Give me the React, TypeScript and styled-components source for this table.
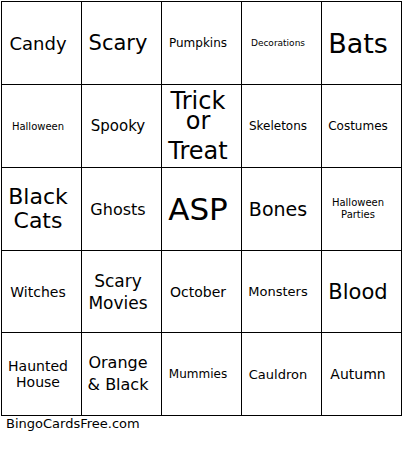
import React from "react";
import styled, { createGlobalStyle } from "styled-components";

const GlobalStyle = createGlobalStyle`
  html, body {
    margin: 0;
    padding: 0;
    background: #ffffff;
  }
  body {
    font-family: "DejaVu Sans", "Liberation Sans", sans-serif;
    color: #000000;
  }
`;

const Page = styled.div`
  padding: 1px 0 0 1px;
  width: 402px;
`;

const Board = styled.div`
  display: grid;
  grid-template-columns: repeat(5, 80px);
  grid-template-rows: 83px 83px 83px 82px 83px;
  border-top: 1px solid #000;
  border-left: 1px solid #000;
  width: 400px;
`;

const Cell = styled.div<{ $size: number; $lh?: number }>`
  box-sizing: border-box;
  border-right: 1px solid #000;
  border-bottom: 1px solid #000;
  display: flex;
  align-items: center;
  justify-content: center;
  text-align: center;
  padding: 0 7px 0 0;
  overflow: visible;
  font-size: ${(p) => p.$size}px;
  line-height: ${(p) => (p.$lh ? `${p.$lh}px` : "normal")};
`;

const Stack = styled.div`
  display: flex;
  flex-direction: column;
  align-items: center;
  margin-top: 10px;
`;

const StackLine = styled.span<{ $lh: number }>`
  display: block;
  line-height: ${(p) => p.$lh}px;
`;

const Footer = styled.div`
  font-size: 13px;
  line-height: normal;
  padding-left: 5px;
`;

type Item = { lines: string[]; size: number; lh?: number };

const items: Item[] = [
  { lines: ["Candy"], size: 18 },
  { lines: ["Scary"], size: 21 },
  { lines: ["Pumpkins"], size: 12 },
  { lines: ["Decorations"], size: 9 },
  { lines: ["Bats"], size: 27 },
  { lines: ["Halloween"], size: 10 },
  { lines: ["Spooky"], size: 15 },
  { lines: ["Trick", "or", "Treat"], size: 24 },
  { lines: ["Skeletons"], size: 12 },
  { lines: ["Costumes"], size: 12 },
  { lines: ["Black", "Cats"], size: 22, lh: 24 },
  { lines: ["Ghosts"], size: 16 },
  { lines: ["ASP"], size: 31 },
  { lines: ["Bones"], size: 19 },
  { lines: ["Halloween", "Parties"], size: 10, lh: 12 },
  { lines: ["Witches"], size: 14 },
  { lines: ["Scary", "Movies"], size: 17, lh: 22 },
  { lines: ["October"], size: 14 },
  { lines: ["Monsters"], size: 13 },
  { lines: ["Blood"], size: 21 },
  { lines: ["Haunted", "House"], size: 14, lh: 16 },
  { lines: ["Orange", "& Black"], size: 16, lh: 22 },
  { lines: ["Mummies"], size: 12 },
  { lines: ["Cauldron"], size: 13 },
  { lines: ["Autumn"], size: 14 },
];

const trickHeights = [20, 20, 40];

export default function App() {
  return (
    <>
      <GlobalStyle />
      <Page>
        <Board>
          {items.map((item, i) => (
            <Cell key={i} $size={item.size} $lh={item.lh}>
              {item.lines.length === 3 ? (
                <Stack>
                  {item.lines.map((l, j) => (
                    <StackLine key={j} $lh={trickHeights[j]}>
                      {l}
                    </StackLine>
                  ))}
                </Stack>
              ) : (
                <span>
                  {item.lines.map((l, j) => (
                    <React.Fragment key={j}>
                      {j > 0 && <br />}
                      {l}
                    </React.Fragment>
                  ))}
                </span>
              )}
            </Cell>
          ))}
        </Board>
        <Footer>BingoCardsFree.com</Footer>
      </Page>
    </>
  );
}
